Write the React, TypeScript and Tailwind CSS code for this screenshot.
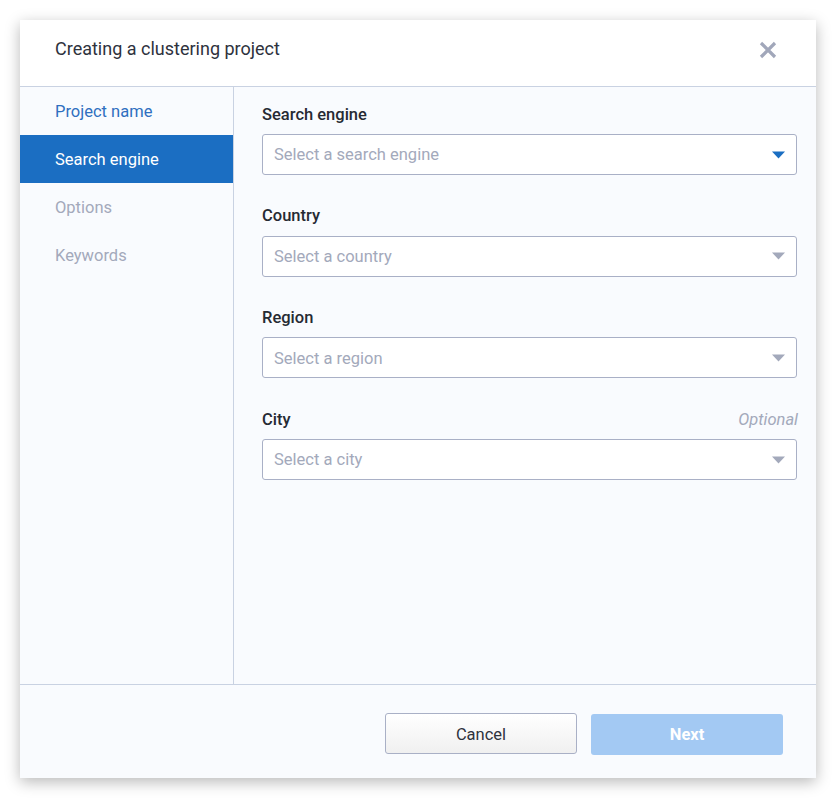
import React from "react";

const Caret = ({ color }: { color: string }) => (
  <svg width="13" height="8" viewBox="0 0 13 8" className="shrink-0">
    <path d="M0 0.5 H13 L6.5 7.5 Z" fill={color} />
  </svg>
);

const Field = ({
  label,
  placeholder,
  active,
  optional,
}: {
  label: string;
  placeholder: string;
  active?: boolean;
  optional?: boolean;
}) => (
  <div className="flex flex-col">
    <div className="flex items-center justify-between h-[20px] mb-[10px] pt-[2px] -mr-px">
      <span className="text-[16.5px] font-medium text-[#262a33]">{label}</span>
      {optional && <span className="text-[16.5px] italic text-[#a3a9bb]">Optional</span>}
    </div>
    <div className="h-[41px] rounded-[3px] border border-[#a9b0c6] bg-white flex items-center justify-between pl-[11px] pr-[11px]">
      <span className="text-[16.5px] text-[#a3a9bb] pt-[2px]">{placeholder}</span>
      <Caret color={active ? "#1b6ec2" : "#a3a9bb"} />
    </div>
  </div>
);

export default function App() {
  return (
    <div
      className="w-[836px] h-[798px] bg-white p-[20px]"
      style={{ fontFamily: "Roboto, 'Liberation Sans', sans-serif" }}
    >
      <div className="w-[796px] h-[758px] bg-[#f9fbfe] flex flex-col shadow-[0_4px_14px_rgba(0,0,0,0.28)]">
        <div className="h-[67px] bg-white border-b border-[#c9d2e2] flex items-center justify-between pl-[35px] pr-[39px] shrink-0">
          <span className="text-[18px] text-[#2e323d] -mt-[10px]">Creating a clustering project</span>
          <svg width="18" height="18" viewBox="0 0 18 18" className="-mt-[7px]">
            <path d="M2 2 L16 16 M16 2 L2 16" stroke="#a1a7ba" strokeWidth="3.2" />
          </svg>
        </div>
        <div className="flex flex-1 min-h-0">
          <div className="w-[214px] border-r border-[#c9d2e2] flex flex-col shrink-0">
            <div className="h-[48px] flex items-center pl-[35px] pt-[2px] text-[16.5px] text-[#2f6fc0]">Project name</div>
            <div className="h-[48px] flex items-center pl-[35px] pt-[2px] text-[16.5px] text-white bg-[#1b6ec2]">Search engine</div>
            <div className="h-[48px] flex items-center pl-[35px] pt-[2px] text-[16.5px] text-[#a3a9bb]">Options</div>
            <div className="h-[48px] flex items-center pl-[35px] pt-[2px] text-[16.5px] text-[#a3a9bb]">Keywords</div>
          </div>
          <div className="flex-1 pl-[28px] pr-[19px] pt-[17px] flex flex-col gap-[30.7px]">
            <Field label="Search engine" placeholder="Select a search engine" active />
            <Field label="Country" placeholder="Select a country" />
            <Field label="Region" placeholder="Select a region" />
            <Field label="City" placeholder="Select a city" optional />
          </div>
        </div>
        <div className="h-[94px] border-t border-[#c9d2e2] shrink-0 flex items-start justify-end pr-[33px] pt-[28px] gap-[14px]">
          <button className="w-[192px] h-[41px] pt-[3px] rounded-[3px] border border-[#a9b0c6] bg-gradient-to-b from-white to-[#f0f0f0] text-[16.5px] text-[#2e323d]">
            Cancel
          </button>
          <button className="w-[192px] h-[41px] mt-px pt-[2px] rounded-[3px] bg-[#a3c9f3] text-[16.5px] font-bold text-white">
            Next
          </button>
        </div>
      </div>
    </div>
  );
}
